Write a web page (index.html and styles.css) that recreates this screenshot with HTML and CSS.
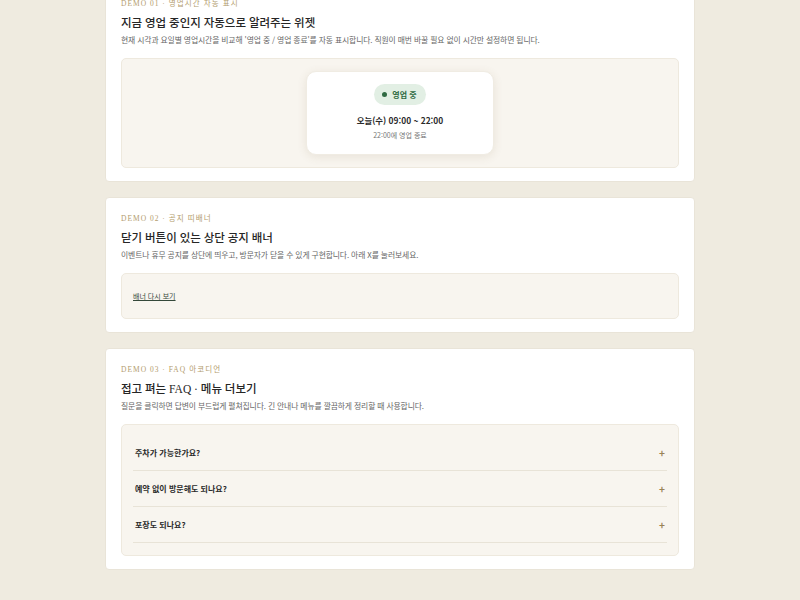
FILE: index.html
```html
<!DOCTYPE html>
<html lang="ko">
<head>
<meta charset="utf-8">
<title>Demo</title>
<link rel="stylesheet" href="styles.css">
</head>
<body>
<main class="page">
  <section class="card">
    <div class="label"><span class="label-en">DEMO 01 ·</span> 영업시간 자동 표시</div>
    <h2 class="title">지금 영업 중인지 자동으로 알려주는 위젯</h2>
    <p class="desc">현재 시각과 요일별 영업시간을 비교해 '영업 중 / 영업 종료'를 자동 표시합니다. 직원이 매번 바꿀 필요 없이 시간만 설정하면 됩니다.</p>
    <div class="demo demo-center">
      <div class="widget">
        <div class="pill"><span class="dot"></span>영업 중</div>
        <div class="hours">오늘(수) 09:00 ~ 22:00</div>
        <div class="sub">22:00에 영업 종료</div>
      </div>
    </div>
  </section>

  <section class="card">
    <div class="label"><span class="label-en">DEMO 02 ·</span> 공지 띠배너</div>
    <h2 class="title">닫기 버튼이 있는 상단 공지 배너</h2>
    <p class="desc">이벤트나 휴무 공지를 상단에 띄우고, 방문자가 닫을 수 있게 구현합니다. 아래 X를 눌러보세요.</p>
    <div class="demo demo-link">
      <a class="relink" href="#">배너 다시 보기</a>
    </div>
  </section>

  <section class="card">
    <div class="label"><span class="label-en">DEMO 03 · FAQ</span> 아코디언</div>
    <h2 class="title">접고 펴는 FAQ · 메뉴 더보기</h2>
    <p class="desc">질문을 클릭하면 답변이 부드럽게 펼쳐집니다. 긴 안내나 메뉴를 깔끔하게 정리할 때 사용합니다.</p>
    <div class="demo demo-faq">
      <div class="faq-row"><span class="q">주차가 가능한가요?</span><span class="plus">+</span></div>
      <div class="faq-row"><span class="q">예약 없이 방문해도 되나요?</span><span class="plus">+</span></div>
      <div class="faq-row"><span class="q">포장도 되나요?</span><span class="plus">+</span></div>
    </div>
  </section>
</main>
</body>
</html>
```
FILE: styles.css
```css
* { box-sizing: border-box; }
html, body { margin: 0; padding: 0; }
body {
  background: #efebe0;
  font-family: "Noto Sans CJK KR", "Noto Sans", sans-serif;
  color: #2a2a2a;
}
.page {
  width: 590px;
  margin: -18px auto 0;
  display: flex;
  flex-direction: column;
  gap: 15px;
  padding-bottom: 40px;
}
.card {
  background: #ffffff;
  border: 1px solid #e9e4d8;
  border-radius: 4px;
  padding: 16px 15px 13px;
}
.label {
  font-size: 7.5px;
  line-height: 10px;
  letter-spacing: 1.1px;
  color: #b39c6e;
  font-family: "Liberation Serif", "Noto Sans CJK KR", serif;
}
.label-en { font-family: "Liberation Serif", serif; letter-spacing: 1px; }
.title {
  margin: 7px 0 0;
  font-size: 11.5px;
  line-height: 14px;
  font-weight: 500;
  color: #262626;
  font-family: "Liberation Serif", "Noto Sans CJK KR", serif;
}
.desc {
  margin: 4px 0 0;
  font-size: 7.8px;
  line-height: 12px;
  color: #666;
  letter-spacing: -0.1px;
}
.demo {
  margin-top: 12px;
  background: #f8f5ef;
  border: 1px solid #eee9de;
  border-radius: 5px;
}
.demo-center {
  display: flex;
  justify-content: center;
  padding: 12px 0 12px;
}
.widget {
  width: 188px;
  height: 84px;
  background: #fff;
  border-radius: 10px;
  box-shadow: 0 2px 10px rgba(120, 100, 60, 0.12);
  border: 1px solid #f0ece3;
  display: flex;
  flex-direction: column;
  align-items: center;
  padding-top: 12px;
}
.pill {
  height: 21px;
  padding: 0 9px 0 8px;
  border-radius: 11px;
  background: #e2efe4;
  color: #2f6a42;
  font-weight: 700;
  font-size: 8px;
  display: flex;
  align-items: center;
  gap: 5px;
}
.dot {
  width: 5px;
  height: 5px;
  border-radius: 50%;
  background: #2f6a42;
}
.hours {
  margin-top: 9px;
  font-size: 8.4px;
  line-height: 12px;
  font-weight: 700;
  color: #2a2a2a;
}
.sub {
  margin-top: 4px;
  font-size: 7px;
  line-height: 10px;
  color: #777;
}
.demo-link {
  height: 46px;
  padding: 0 11px;
  display: flex;
  align-items: center;
}
.relink {
  font-size: 7px;
  line-height: 10px;
  color: #34483a;
  text-decoration: underline;
}
.demo-faq {
  padding: 10px 11px 12px;
}
.faq-row {
  height: 36px;
  border-bottom: 1px solid #e8e3d7;
  display: flex;
  align-items: center;
  justify-content: space-between;
  padding: 0 2px 0 2px;
}
.q {
  font-size: 8px;
  font-weight: 700;
  color: #2a2a2a;
}
.plus {
  font-size: 10px;
  line-height: 10px;
  color: #9a8356;
  font-weight: 700;
}
```
